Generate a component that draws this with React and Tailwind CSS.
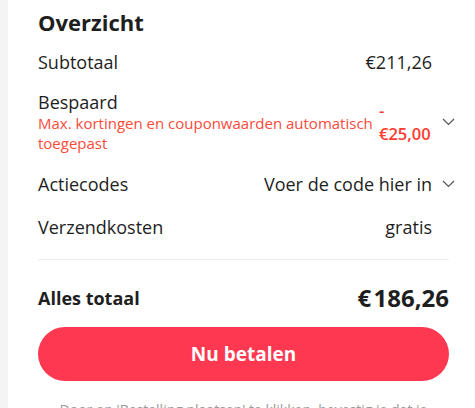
function Chevron() {
  return (
    <svg width="13" height="8" viewBox="0 0 13 8" className="ml-[10px] shrink-0" fill="none">
      <polyline points="1,1 6.5,6.5 12,1" stroke="#555" strokeWidth="1.2" />
    </svg>
  );
}

function Row({ label, value, chevron = false, className = '' }) {
  return (
    <div className={`flex items-center justify-between h-6 ${className}`}>
      <span className="text-[18px] text-[#1e1e1e]">{label}</span>
      <div className="flex items-center">
        <span className="text-[18px] text-[#1e1e1e]">{value}</span>
        {chevron ? <Chevron /> : <span className="w-[23px]" />}
      </div>
    </div>
  );
}

export default function App() {
  return (
    <div className="flex bg-[#f4f4f4] h-[408px] overflow-hidden pl-2" style={{ fontFamily: '"Open Sans", sans-serif' }}>
      <div className="flex-1 min-w-0 overflow-hidden bg-white pl-[30px] pr-[20px] pt-[8px]">
        <h2 className="text-[22px] leading-[28px] font-bold text-[#1e1e1e]">Overzicht</h2>

        <Row label="Subtotaal" value="€211,26" className="mt-[14px]" />

        {/* Bespaard */}
        <div className="flex items-center justify-between mt-[17px]">
          <div className="flex-1">
            <div className="text-[18px] leading-[22px] text-[#1e1e1e]">Bespaard</div>
            <div className="text-[15px] leading-5 text-[#fb4b3b] pr-[6px]">
              Max. kortingen en couponwaarden automatisch toegepast
            </div>
          </div>
          <div className="flex items-center">
            <div className="flex flex-col w-[53px] text-[16.5px] leading-[23px] font-semibold text-[#fd3b2f]">
              <span>-</span>
              <span>€25,00</span>
            </div>
            <Chevron />
          </div>
        </div>

        <Row label="Actiecodes" value="Voer de code hier in" chevron className="mt-[19px]" />
        <Row label="Verzendkosten" value="gratis" className="mt-[19px]" />

        <div className="h-px bg-[#eeeeee] mt-[20px] mr-[6px]" />

        <div className="flex items-center justify-between mt-[26px] mr-[6px] h-6">
          <span className="text-[18px] font-bold text-[#1e1e1e]">Alles totaal</span>
          <span className="text-[24px] font-bold text-[#1e1e1e]">€&#8202;186,26</span>
        </div>

        <button className="w-[calc(100%-6px)] h-[54px] mt-[17px] rounded-full bg-[#fe3850] text-white text-[19px] font-bold">
          Nu betalen
        </button>

        <p className="mt-[19px] text-[14px] leading-5 text-[#999] text-center pr-[6px]">
          Door op 'Bestelling plaatsen' te klikken, bevestig je dat je akkoord gaat met de voorwaarden
        </p>
      </div>
    </div>
  );
}
